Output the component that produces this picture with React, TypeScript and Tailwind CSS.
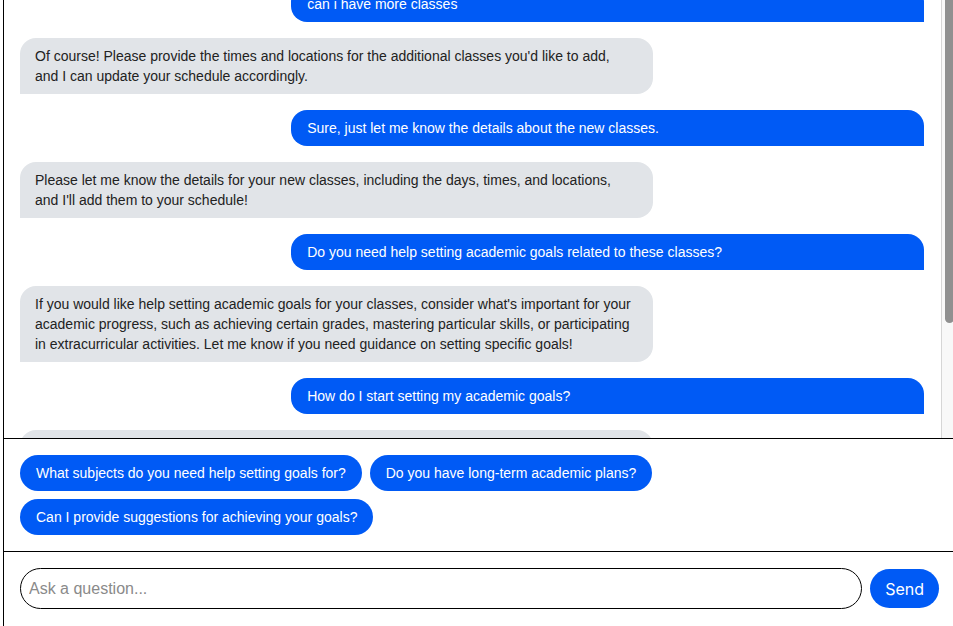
import { useLayoutEffect, useRef } from "react";

type Message = { from: "user" | "bot"; text: string };

const messages: Message[] = [
  { from: "user", text: "can i have more classes" },
  {
    from: "bot",
    text: "Of course! Please provide the times and locations for the additional classes you'd like to add, and I can update your schedule accordingly.",
  },
  { from: "user", text: "Sure, just let me know the details about the new classes." },
  {
    from: "bot",
    text: "Please let me know the details for your new classes, including the days, times, and locations, and I'll add them to your schedule!",
  },
  { from: "user", text: "Do you need help setting academic goals related to these classes?" },
  {
    from: "bot",
    text: "If you would like help setting academic goals for your classes, consider what's important for your academic progress, such as achieving certain grades, mastering particular skills, or participating in extracurricular activities. Let me know if you need guidance on setting specific goals!",
  },
  { from: "user", text: "How do I start setting my academic goals?" },
  {
    from: "bot",
    text: "To start setting your academic goals, think about what you want to achieve this term, break it into smaller steps, and set deadlines for each one. Write them down and review your progress regularly so you can adjust along the way.",
  },
];

const suggestions = [
  "What subjects do you need help setting goals for?",
  "Do you have long-term academic plans?",
  "Can I provide suggestions for achieving your goals?",
];

export default function App() {
  const listRef = useRef<HTMLDivElement>(null);

  useLayoutEffect(() => {
    if (listRef.current) listRef.current.scrollTop = 30;
  }, []);

  return (
    <div className="h-[626px] w-[953px] overflow-hidden bg-white font-['Liberation_Sans',Arial,sans-serif]">
      <div className="ml-[3px] flex h-[660px] w-[953px] flex-col border-l border-black">
        <div className="flex h-[438px] shrink-0">
          <div ref={listRef} className="min-w-0 flex-1 overflow-y-auto">
            <div className="flex flex-col gap-4 py-4 pl-4 pr-[17px]">
              {messages.map((m, i) =>
                m.from === "user" ? (
                  <div
                    key={i}
                    className="w-[70%] self-end rounded-2xl rounded-br-none bg-[#005af5] px-4 py-2 text-sm leading-5 text-white"
                  >
                    {m.text}
                  </div>
                ) : (
                  <div
                    key={i}
                    className="w-[70%] self-start rounded-2xl rounded-bl-none bg-[#e1e4e8] py-2 pl-[15px] pr-4 text-sm leading-5 text-[#222]"
                  >
                    {m.text}
                  </div>
                ),
              )}
            </div>
          </div>
          {/* scrollbar track */}
          <div className="w-[15px] shrink-0 border-l border-[#d6d6d6] bg-[#f8f8f8] pl-[3px] pr-[2px]">
            <div className="h-[323px] rounded-b-[5px] bg-[#909090]" />
          </div>
        </div>
        <div className="flex flex-wrap gap-2 border-t border-black p-4">
          {suggestions.map((s) => (
            <button
              key={s}
              type="button"
              className="h-9 rounded-full bg-[#005af5] px-4 text-sm text-white"
            >
              {s}
            </button>
          ))}
        </div>
        <div className="flex items-center gap-2 border-t border-black px-4 pt-4">
          <input
            placeholder="Ask a question..."
            className="h-[41px] flex-1 rounded-full border border-black pl-2 text-base text-[#222] outline-none placeholder:text-[#8a8a8a]"
          />
          <button
            type="button"
            className="mr-px h-[39px] rounded-full bg-[#005af5] px-[15px] font-['Inter',sans-serif] text-base text-white"
          >
            Send
          </button>
        </div>
      </div>
    </div>
  );
}
